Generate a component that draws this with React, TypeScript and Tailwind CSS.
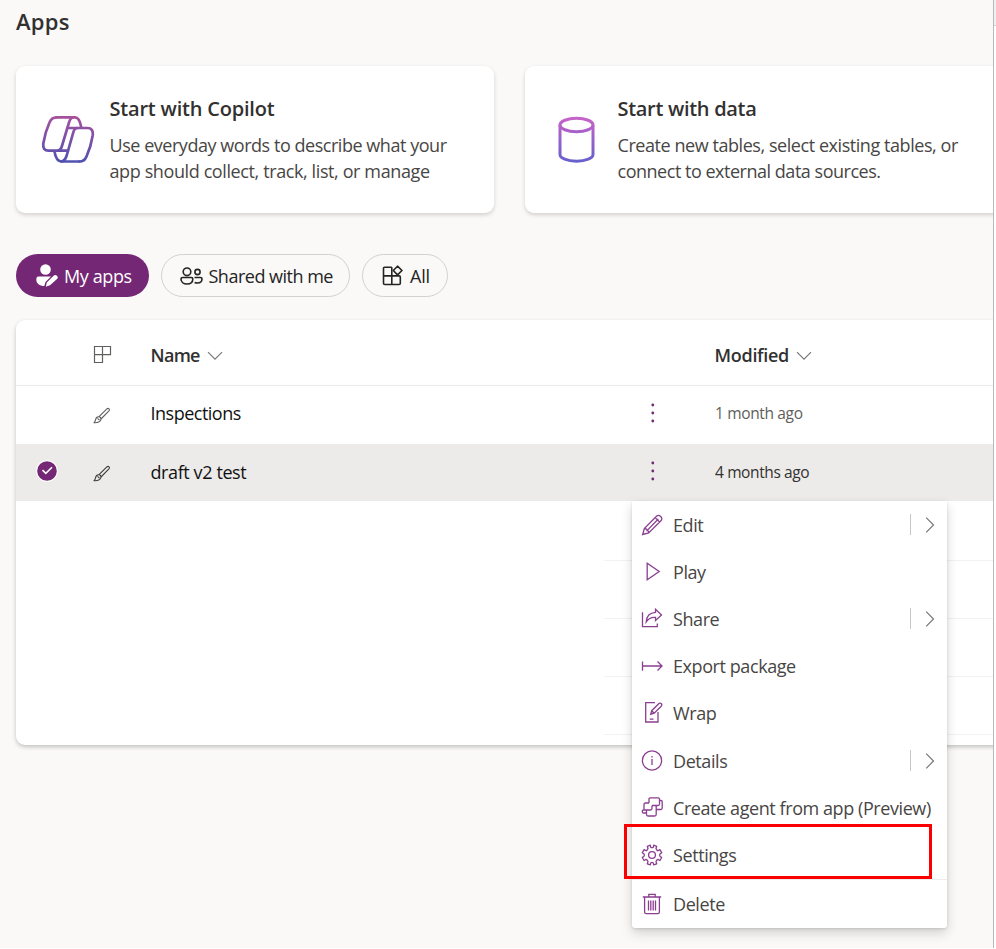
import type { ReactNode } from "react";

const purple = "#8a3f91";

function CopilotIcon() {
  return (
    <svg width="54" height="48" viewBox="0 0 54 48" fill="none" className="shrink-0">
      <defs>
        <linearGradient id="cp" x1="0" y1="0" x2="0" y2="48" gradientUnits="userSpaceOnUse">
          <stop stopColor="#a8509c" />
          <stop offset="1" stopColor="#4f52b2" />
        </linearGradient>
      </defs>
      <g stroke="url(#cp)" strokeWidth="2.7" strokeLinejoin="round" strokeLinecap="round">
        <path d="M15.5 2.300H34Q38.500 2.300 40.300 12.500" />
        <path d="M15.500 2.300Q10.500 2.300 8.500 7.500Q4 17.500 2.300 28.500Q1.500 35.700 7.500 35.700H17Q19.500 35.700 20.800 31.500L28 7.500Q29.500 2.800 32 2.300" />
        <path d="M38.500 46.500H20.500Q15 46.500 13.400 36" />
        <path d="M38.500 46.500Q43.500 46.500 45.500 41.500Q50 31.500 51.700 20.500Q52.500 13 46.500 13H36.500Q33.500 13 32.300 17.300L25.700 40.500Q24 46 20.500 46.500" />
        <path d="M27 13H36.500M17.500 35.700H27" />
      </g>
    </svg>
  );
}

function DataIcon() {
  return (
    <svg width="38" height="48" viewBox="0 0 38 48" fill="none" className="shrink-0">
      <defs>
        <linearGradient id="db" x1="0" y1="0" x2="0" y2="48" gradientUnits="userSpaceOnUse">
          <stop stopColor="#cb62c8" />
          <stop offset="1" stopColor="#6260cc" />
        </linearGradient>
      </defs>
      <g stroke="url(#db)" strokeWidth="3">
        <ellipse cx="18.500" cy="9" rx="16.500" ry="6.700" />
        <path d="M2 9V38.500C2 42.200 9 45.200 18.500 45.200S35 42.200 35 38.500V9" />
      </g>
    </svg>
  );
}

function PersonEditIcon() {
  return (
    <svg width="22" height="23" viewBox="0 0 22 23" fill="#fff" className="shrink-0">
      <circle cx="9.500" cy="5.500" r="5.300" />
      <path d="M2.500 12.500H15L9.500 18L8.300 22C3.500 22 .3 19.500 .3 15.500C.3 13.500 1 12.500 2.500 12.500Z" />
      <path d="M17.600 11.800A2.100 2.100 0 0 1 21 15L14 21.300L9.800 22.700L10.800 18.500Z" />
    </svg>
  );
}

function PeopleIcon() {
  return (
    <svg width="23" height="18" viewBox="0 0 23 18" fill="none" stroke="#242424" strokeWidth="1.600" className="shrink-0">
      <circle cx="7" cy="4.800" r="3.800" />
      <circle cx="17.500" cy="5" r="2.600" />
      <path d="M2.700 10.500H11.300Q12.800 10.500 12.800 12C12.800 15 10.500 17 7 17S1 15 1 12Q1 10.500 2.700 10.500Z" />
      <path d="M14.500 10.500H20.500Q22 10.500 22 12C22 14.500 20 16 17.300 16Q15.800 16 14.600 15.500" />
    </svg>
  );
}

function AppsIcon() {
  return (
    <svg width="21" height="21" viewBox="0 0 21 21" fill="none" stroke="#242424" strokeWidth="1.600" strokeLinejoin="round" className="shrink-0">
      <path d="M9.800 2.200H2.600Q1.500 2.200 1.500 3.300V18.200Q1.500 19.500 2.800 19.500H17Q18.300 19.500 18.300 18.200V12Q18.300 10.900 17.200 10.900H1.500M9.800 2.200V19.500" />
      <path d="M15.500 1.200L20 5.500L15.500 9.900L11.300 5.500Z" />
    </svg>
  );
}

function GridIcon() {
  return (
    <svg width="19" height="19" viewBox="0 0 19 19" fill="none" stroke="#62605e" strokeWidth="1.200">
      <path d="M1.500 1.500H17.500V9.700H1.500ZM1.500 9.700V17.500H9.500V1.500" />
    </svg>
  );
}

function BrushIcon({ dark }: { dark?: boolean }) {
  return (
    <svg width="18" height="18" viewBox="0 0 18 18" fill="none" stroke={dark ? "#3f3d3b" : "#605e5c"} strokeWidth="1.100" strokeLinejoin="round">
      <path d="M5.800 9.800L13.600 2.100Q15 .9 16 1.900T15.700 4.200L8 12" />
      <path d="M5.800 9.800Q8 10 8 12C7.800 14.800 4.500 16.200 1 15.700Q2.200 14.600 2.500 12.800C2.900 10.800 4.300 9.700 5.800 9.800ZM4.500 11.300L6.500 13.200" />
    </svg>
  );
}

function ChevronDown() {
  return (
    <svg width="16" height="10" viewBox="0 0 16 10" fill="none" stroke="#7a7876" strokeWidth="1.200">
      <path d="M1 1.200L8 8.200L15 1.200" />
    </svg>
  );
}

function Dots() {
  return (
    <svg width="4" height="20" viewBox="0 0 4 20" fill="#742774">
      <circle cx="1.800" cy="2" r="1.400" />
      <circle cx="1.800" cy="10" r="1.400" />
      <circle cx="1.800" cy="18" r="1.400" />
    </svg>
  );
}

function CheckCircle() {
  return (
    <svg width="22" height="22" viewBox="0 0 22 22" fill="none">
      <circle cx="11" cy="11" r="10.800" fill="#fff" />
      <circle cx="11" cy="11" r="9.800" fill="#742774" />
      <path d="M6.500 10.200L9.800 13.300L16 7.300" stroke="#fff" strokeWidth="1.600" />
    </svg>
  );
}

function MenuSvg({ children }: { children: ReactNode }) {
  return (
    <svg width="22" height="22" viewBox="0 0 22 22" fill="none" stroke={purple} strokeWidth="1.300" className="shrink-0">
      {children}
    </svg>
  );
}

const icons: Record<string, ReactNode> = {
  edit: (
    <MenuSvg>
      <path d="M1.700 20.500L3.300 14.500L15.500 2.300Q17.500 .3 19.700 2.500T19.900 6.700L7.700 18.900ZM3.300 14.500Q6 14.300 6 16.600Q8 16.700 7.700 18.900M6 16.600L17.300 5M14.200 3.600L18.600 8" />
    </MenuSvg>
  ),
  play: (
    <MenuSvg>
      <path d="M6.200 2.300V18.700L18.200 10.500Z" />
    </MenuSvg>
  ),
  share: (
    <MenuSvg>
      <path d="M1.500 4.200V18.700H16.300V15.500" />
      <path d="M14.500 1.300L20.500 7L14.500 12.600V9.400Q8.500 8.800 5.200 14Q5.700 5 14.500 4.400Z" />
    </MenuSvg>
  ),
  export: (
    <MenuSvg>
      <path d="M1.500 6.500V15.700M1.500 11H21M16.500 6.500L21 11L16.500 15.500" />
    </MenuSvg>
  ),
  wrap: (
    <MenuSvg>
      <path d="M14 .7H4.700V20H17V10M8.700 17.200H12.500" />
      <path d="M9.700 12.300L10.700 8.700L17.700 1.700Q19 .5 20.200 1.600T20.200 4.200L13.200 11.200ZM10.700 8.700L13.200 11.200" />
    </MenuSvg>
  ),
  details: (
    <MenuSvg>
      <circle cx="11" cy="10.500" r="9.600" />
      <path d="M11 9V15M11 6V7.500" />
    </MenuSvg>
  ),
  agent: (
    <MenuSvg>
      <path d="M8 6V2.200Q8 .9 9.300 .9H17.200Q18.500 .9 18.500 2.200V7Q18.500 8.500 17 8.500H11" />
      <path d="M18.500 3.500H20Q21.200 3.500 21.200 5V11Q21.200 12.500 19.800 12.500H15" />
      <path d="M8 6H4.500Q3 6 3 7.500V12.500M11 8.500V11.500Q11 13 9.500 13H2.700Q1.300 13 1.300 14.300V14.700Q1.300 16 2.700 16H5.500" />
      <path d="M5.500 13V17.500Q5.500 19 7 19H13.700Q15.200 19 15.200 17.500V8.500" />
    </MenuSvg>
  ),
  settings: (
    <MenuSvg>
      <circle cx="11" cy="11" r="3.400" />
      <path strokeLinejoin="round" d="M9.300 1.200L9.700 3.200Q11 4.200 12.300 3.200L12.700 1.200L15.700 2.300L15 4.500Q15.300 6 16.900 6.800L18.900 5.600L20.700 8.700L19 10Q18.200 11 19 12.200L20.700 13.500L18.900 16.500L16.900 15.400Q15.300 16 15 17.600L15.700 19.800L12.700 20.900L12.300 18.900Q11 17.900 9.700 18.900L9.300 20.900L6.300 19.800L7 17.600Q6.700 16 5.100 15.400L3.100 16.500L1.300 13.500L3 12.200Q3.800 11 3 10L1.300 8.700L3.100 5.600L5.100 6.800Q6.700 6 7 4.500L6.300 2.300Z" />
    </MenuSvg>
  ),
  trash: (
    <MenuSvg>
      <path d="M1.800 4H20.200M7.800 4V1.300H14.200V4M3.600 4V19Q3.600 20.700 5.300 20.700H16.700Q18.400 20.700 18.400 19V4M7.500 7.500V17.500M9.800 7.500V17.500M12.200 7.500V17.500M14.500 7.500V17.500" />
    </MenuSvg>
  ),
};

const menu = [
  { icon: "edit", label: "Edit", sub: true },
  { icon: "play", label: "Play" },
  { icon: "share", label: "Share", sub: true },
  { icon: "export", label: "Export package" },
  { icon: "wrap", label: "Wrap" },
  { icon: "details", label: "Details", sub: true },
  { icon: "agent", label: "Create agent from app (Preview)" },
  { icon: "settings", label: "Settings" },
];

function ContextMenu() {
  return (
    <div className="absolute left-[632px] top-[501px] h-[427px] w-[315px] rounded-b-[3px] bg-white text-[18px] tracking-[-0.42px] text-[#484644] shadow-[0_5px_12px_rgba(0,0,0,0.16),0_1px_3px_rgba(0,0,0,0.12)]">
      {menu.map((m) => (
        <div key={m.label} className="flex h-[47.200px] items-center pl-[9px] pr-[12.500px]">
          {icons[m.icon]}
          <span className="ml-[10px] whitespace-nowrap pt-[1px]">{m.label}</span>
          {m.sub && (
            <span className="ml-auto flex items-center">
              <span className="mr-[13.500px] h-[21px] w-px bg-[#c8c6c4]" />
              <svg width="10" height="16" viewBox="0 0 10 16" fill="none" stroke="#797775" strokeWidth="1.200">
                <path d="M1.200 .7L8.500 8L1.200 15.300" />
              </svg>
            </span>
          )}
        </div>
      ))}
      <div className="flex h-[49px] items-center border-t border-[#eeedec] pl-[9px]">
        {icons.trash}
        <span className="ml-[10px] pt-[1px]">Delete</span>
      </div>
    </div>
  );
}

export default function App() {
  return (
    <div className="relative flex h-[949px] w-[996px] overflow-hidden bg-white font-['Open_Sans','Noto_Sans',sans-serif] text-[#323130]">
      <div className="flex h-[948px] w-[993px] shrink-0 flex-col overflow-hidden bg-[#faf9f8] pl-[16px]">
        <h1 className="mt-[5px] h-[32px] text-[22px] font-semibold leading-[32px] tracking-[0.300px]">Apps</h1>

        <div className="mt-[29px] flex gap-[31px]">
          <div className="flex h-[147px] w-[478px] shrink-0 rounded-[9px] bg-white pl-[25px] shadow-[0_2px_4px_rgba(0,0,0,0.16)]">
            <div className="mt-[49px] w-[68.500px] shrink-0"><CopilotIcon /></div>
            <div className="mt-[27px] whitespace-nowrap">
              <h2 className="h-[32px] text-[20px] font-semibold leading-[32px] tracking-[-0.2px]">Start with Copilot</h2>
              <p className="mt-[7px] text-[18px] leading-[26px] text-[#484644]">
                <span className="tracking-[-0.460px]">Use everyday words to describe what your</span>
                <br />
                <span className="tracking-[-0.390px]">app should collect, track, list, or manage</span>
              </p>
            </div>
          </div>
          <div className="flex h-[147px] w-[500px] shrink-0 rounded-[9px] bg-white pl-[33px] shadow-[0_2px_4px_rgba(0,0,0,0.16)]">
            <div className="mt-[50px] w-[59.500px] shrink-0"><DataIcon /></div>
            <div className="mt-[27px] whitespace-nowrap">
              <h2 className="h-[32px] text-[20px] font-semibold leading-[32px] tracking-[-0.300px]">Start with data</h2>
              <p className="mt-[7px] text-[18px] leading-[26px] tracking-[-0.440px] text-[#484644]">
                Create new tables, select existing tables, or
                <br />
                <span className="tracking-[-0.480px]">connect to external data sources.</span>
              </p>
            </div>
          </div>
        </div>

        <div className="mt-[41px] flex h-[43px] gap-[12px] text-[18px] text-[#242424]">
          <button className="flex w-[133px] items-center gap-[6px] whitespace-nowrap rounded-full bg-[#742774] pl-[20px] tracking-[-0.400px] text-white">
            <PersonEditIcon />
            <span className="pt-[2px]">My apps</span>
          </button>
          <button className="flex w-[189px] items-center gap-[6px] whitespace-nowrap rounded-full border border-[#d1d1d1] pl-[17.500px] tracking-[-0.500px]">
            <PeopleIcon />
            <span className="pt-[2px]">Shared with me</span>
          </button>
          <button className="flex w-[86px] items-center gap-[7px] whitespace-nowrap rounded-full border border-[#d1d1d1] pl-[19px] tracking-[-0.200px]">
            <AppsIcon />
            <span className="pt-[2px]">All</span>
          </button>
        </div>

        <div className="mt-[23px] h-[425px] w-[1000px] shrink-0 rounded-[9px] bg-white shadow-[0_2px_4px_rgba(0,0,0,0.22)]">
          <div className="flex h-[66px] items-center border-b border-[#edebe9] pt-[4px] text-[18px] font-semibold">
            <div className="w-[76.500px]" />
            <div className="w-[58px]"><GridIcon /></div>
            <div className="flex w-[564px] items-center gap-[7px] pt-[2px]"><span className="tracking-[-0.700px]">Name</span><ChevronDown /></div>
            <div className="flex items-center gap-[7px] pt-[2px]"><span className="tracking-[-0.300px]">Modified</span><ChevronDown /></div>
          </div>
          <div className="flex h-[58px] items-center">
            <div className="w-[76.500px]" />
            <div className="w-[58px] pt-[1px]"><BrushIcon /></div>
            <div className="w-[500.500px] pb-[3px] text-[18px] tracking-[-0.500px] text-[#111]">Inspections</div>
            <div className="w-[64px] pb-[4px]"><Dots /></div>
            <div className="pb-[2px] text-[15.500px] tracking-[-0.350px] text-[#605e5c]">1 month ago</div>
          </div>
          <div className="flex h-[57px] items-center bg-[#edebe9]">
            <div className="w-[76.500px] pb-[3px] pl-[20px]"><CheckCircle /></div>
            <div className="w-[58px] pt-[3px]"><BrushIcon dark /></div>
            <div className="w-[500.500px] text-[18px] tracking-[-0.400px] text-[#111]">draft v2 test</div>
            <div className="w-[64px] pb-[3px]"><Dots /></div>
            <div className="pt-[1px] text-[15.500px] tracking-[-0.380px] text-[#323130]">4 months ago</div>
          </div>
          <div className="ml-[588px] flex flex-col">
            <div className="h-[60px] border-b border-[#f3f2f1]" />
            <div className="h-[58px] border-b border-[#f3f2f1]" />
            <div className="h-[58px] border-b border-[#f3f2f1]" />
            <div className="h-[58px] border-b border-[#f3f2f1]" />
          </div>
        </div>
      </div>
      <div className="flex h-[948px] w-[3px] flex-col border-l border-[#b9b9b9] bg-white">
        <div className="h-[26px] border-b border-[#d0d0d0] bg-[#f0f0f0]" />
      </div>
      <ContextMenu />
      <div className="absolute left-[624px] top-[824px] h-[55px] w-[308px] border-[3px] border-[#fb0000]" />
    </div>
  );
}
